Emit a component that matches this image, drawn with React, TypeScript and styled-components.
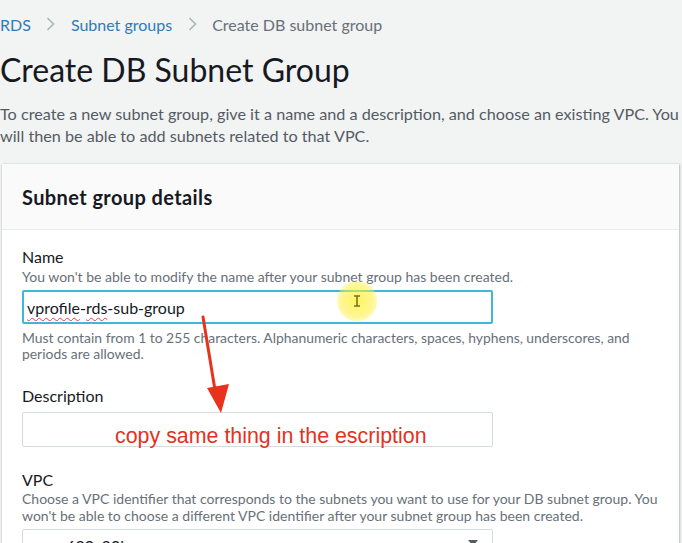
import React from "react";
import styled, { createGlobalStyle } from "styled-components";

const Global = createGlobalStyle`
  html, body { margin: 0; padding: 0; background: #f2f3f3; overflow: hidden; }
  body { font-family: Lato, "Open Sans", sans-serif; color: #16191f; }
  * { box-sizing: border-box; }
`;

const Page = styled.div`
  position: relative;
  width: 682px;
  height: 543px;
  overflow: hidden;
  background: #f2f3f3;
  padding-top: 13px;
`;

const Crumbs = styled.nav`
  display: flex;
  align-items: center;
  height: 22px;
  font-size: 16px;
  padding-left: 0;
`;

const Crumb = styled.span<{ $link?: boolean }>`
  color: ${(p) => (p.$link ? "#2f7bb7" : "#687078")};
`;

const Sep = styled.span`
  display: inline-flex;
  width: 40px;
  justify-content: center;
  color: #aab7b8;
`;

const Title = styled.h1`
  margin: 13px 0 0 0;
  font-size: 32px;
  font-weight: 400;
  line-height: 44px;
  color: #16191f;
`;

const Lead = styled.p`
  margin: 11px 0 0 0;
  font-size: 16.2px;
  line-height: 22px;
  color: #545b64;
  white-space: nowrap;
`;

const Card = styled.section`
  margin: 17px 0 0 2px;
  width: 677px;
  background: #fff;
  box-shadow: 0 1px 2px rgba(0, 28, 36, 0.25), 1px 0 2px rgba(0, 28, 36, 0.15);
`;

const CardHeader = styled.header`
  height: 66px;
  display: flex;
  align-items: center;
  padding-left: 20px;
  background: #fafafa;
  border-bottom: 1px solid #eaeded;
  font-size: 20px;
  letter-spacing: 0.4px;
  font-weight: 700;
  color: #16191f;
`;

const CardBody = styled.div`
  padding: 17px 20px 0 20px;
  display: flex;
  flex-direction: column;
`;

const Field = styled.div<{ $gap?: number }>`
  display: flex;
  flex-direction: column;
  margin-bottom: ${(p) => p.$gap ?? 0}px;
`;

const Label = styled.label`
  font-size: 16px;
  line-height: 20px;
  color: #16191f;
`;

const Hint = styled.div<{ $lh?: number }>`
  font-size: 14px;
  line-height: ${(p) => p.$lh ?? 19}px;
  color: #687078;
  white-space: nowrap;
`;

const Input = styled.div<{ $focus?: boolean }>`
  margin-top: ${(p) => (p.$focus ? 4 : 6)}px;
  width: 471px;
  height: ${(p) => (p.$focus ? 34 : 35)}px;
  border: ${(p) => (p.$focus ? "2px solid #3fb7d5" : "1px solid #d5dbdb")};
  border-radius: 2px;
  display: flex;
  align-items: center;
  padding-left: ${(p) => (p.$focus ? 3 : 4)}px;
  font-size: 16px;
  color: #16191f;
  background: #fff;
`;

const Constraint = styled.div`
  margin-top: 6px;
  font-size: 13.9px;
  line-height: 16px;
  color: #687078;
  white-space: nowrap;
`;

const Spell = styled.span`
  text-decoration: underline wavy #e0414b;
  text-decoration-thickness: 1px;
  text-underline-offset: 3px;
`;

const SelectBox = styled(Input)`
  position: relative;
  margin-top: 5px;
  align-items: flex-start;
  padding-top: 6px;
  padding-left: 4px;
`;

const Caret = styled.span`
  position: absolute;
  right: 14px;
  top: 10px;
  width: 0;
  height: 0;
  border-left: 5px solid transparent;
  border-right: 5px solid transparent;
  border-top: 6px solid #545b64;
`;

const Highlight = styled.div`
  position: absolute;
  left: 337px;
  top: 281px;
  width: 40px;
  height: 40px;
  border-radius: 50%;
  background: radial-gradient(circle, rgba(255, 240, 40, 0.75) 0%, rgba(255, 240, 60, 0.55) 55%, rgba(255, 245, 90, 0) 100%);
  display: flex;
  align-items: center;
  justify-content: center;
`;

const Note = styled.div`
  position: absolute;
  left: 115px;
  top: 422px;
  font-family: "Liberation Sans", Arial, sans-serif;
  font-size: 21.4px;
  line-height: 28px;
  color: #e3321e;
  white-space: nowrap;
`;

const Overlay = styled.svg`
  position: absolute;
  left: 0;
  top: 0;
  pointer-events: none;
`;

const Chevron = () => (
  <svg width="9" height="14" viewBox="0 0 9 14">
    <path d="M1.5 1 L7.5 7 L1.5 13" fill="none" stroke="#aab7b8" strokeWidth="1.6" />
  </svg>
);

export default function App() {
  return (
    <>
      <Global />
      <Page>
        <Crumbs>
          <Crumb $link>RDS</Crumb>
          <Sep>
            <Chevron />
          </Sep>
          <Crumb $link>Subnet groups</Crumb>
          <Sep>
            <Chevron />
          </Sep>
          <Crumb>Create DB subnet group</Crumb>
        </Crumbs>
        <Title>Create DB Subnet Group</Title>
        <Lead>
          To create a new subnet group, give it a name and a description, and choose an existing VPC. You
          <br />
          will then be able to add subnets related to that VPC.
        </Lead>
        <Card>
          <CardHeader>Subnet group details</CardHeader>
          <CardBody>
            <Field $gap={24}>
              <Label>Name</Label>
              <Hint>You won't be able to modify the name after your subnet group has been created.</Hint>
              <Input $focus>
                <span>
                  <Spell>vprofile</Spell>-<Spell>rds</Spell>-sub-group
                </span>
              </Input>
              <Constraint>
                Must contain from 1 to 255 characters. Alphanumeric characters, spaces, hyphens, underscores, and
                <br />
                periods are allowed.
              </Constraint>
            </Field>
            <Field $gap={23}>
              <Label>Description</Label>
              <Input />
            </Field>
            <Field>
              <Label>VPC</Label>
              <Hint $lh={17}>
                Choose a VPC identifier that corresponds to the subnets you want to use for your DB subnet group. You
                <br />
                won't be able to choose a different VPC identifier after your subnet group has been created.
              </Hint>
              <SelectBox>
                vpc-e620c30b
                <Caret />
              </SelectBox>
            </Field>
          </CardBody>
        </Card>
        <Highlight>
          <svg width="10" height="12" viewBox="0 0 10 12">
            <path d="M2 1 H8 M5 1 V11 M2 11 H8" stroke="#7a7320" strokeWidth="1.6" fill="none" />
          </svg>
        </Highlight>
        <Note>copy same thing in the escription</Note>
        <Overlay width="682" height="543" viewBox="0 0 682 543">
          <line x1="203" y1="317" x2="215" y2="390" stroke="#e8321b" strokeWidth="3" strokeLinecap="round" />
          <polygon points="207,388 229,384 221,413" fill="#e8321b" />
        </Overlay>
      </Page>
    </>
  );
}
